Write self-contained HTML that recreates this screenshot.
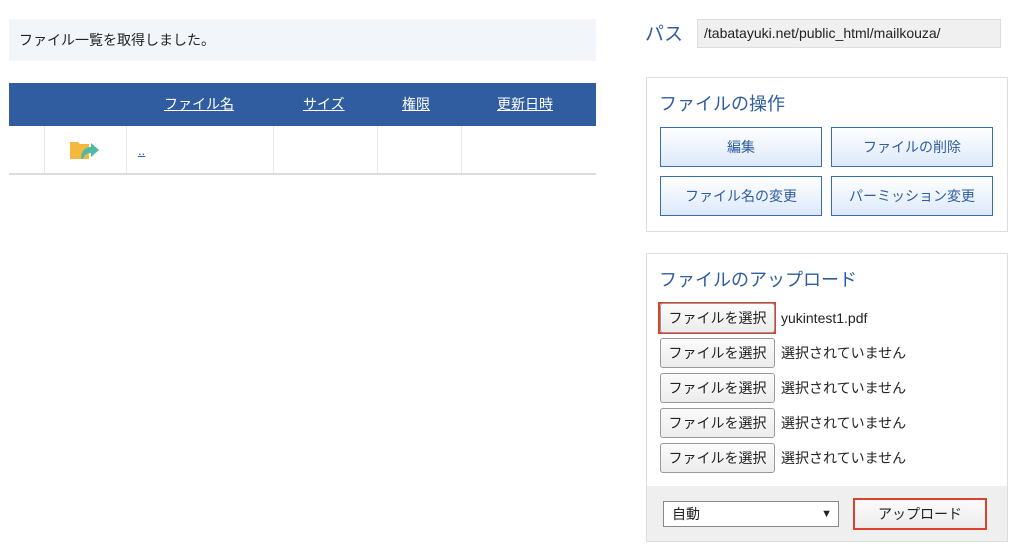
<!DOCTYPE html>
<html><head><meta charset="utf-8"><style>
*{box-sizing:border-box;margin:0;padding:0}
body{width:1024px;height:549px;background:#fff;font-family:"Liberation Sans","Noto Sans CJK JP",sans-serif;position:relative;overflow:hidden;color:#222}
.a{position:absolute}
.msg{left:9px;top:19px;width:587px;height:42px;background:#f2f5f9;font-size:14px;line-height:42px;padding-left:10px}
.th{left:9px;top:83px;width:587px;height:43px;background:#2f5d9f}
.th span{position:absolute;top:0;line-height:43px;color:#fff;font-size:14px;text-decoration:underline}
.vl{top:126px;width:1px;height:48px;background:#e8e8e8}
.pan{border:1px solid #ddd;background:#fff}
.ttl{color:#2f5d9f;font-size:18px}
.ob{border:1px solid #3a6db0;background:linear-gradient(#fff,#dce9fa);color:#2f5d9f;font-size:14px;text-align:center;line-height:38px;height:40px;width:162px}
.fb{left:660px;width:115px;height:30px;border:1px solid #999;border-radius:3px;background:linear-gradient(#fbfbfb,#ececec);font-size:14px;text-align:center;line-height:28px}
.ft{left:781px;font-size:14px;line-height:30px}
</style></head><body>
<div class="a msg">ファイル一覧を取得しました。</div>
<div class="a th"><span style="left:155px">ファイル名</span><span style="left:294px">サイズ</span><span style="left:393px">権限</span><span style="left:488px">更新日時</span></div>
<div class="a vl" style="left:44px"></div><div class="a vl" style="left:126px"></div><div class="a vl" style="left:273px"></div><div class="a vl" style="left:377px"></div><div class="a vl" style="left:461px"></div>
<div class="a" style="left:9px;top:173px;width:587px;height:2px;background:#ddd"></div>
<svg class="a" style="left:69px;top:138px" width="32" height="22" viewBox="0 0 32 22"><path d="M1 4h8l2 2h9v15H1z" fill="#f3b83d"/><path d="M12 21c0-8 4-12 10-12V5l8 7-8 7v-4c-4 0-7 2-8 6z" fill="#4fb9a4"/></svg>
<div class="a" style="left:138px;top:143px;color:#2f5dbf;font-size:13px;text-decoration:underline">..</div>

<div class="a ttl" style="left:645px;top:19px;font-size:19px">パス</div>
<div class="a" style="left:697px;top:19px;width:304px;height:29px;background:#f0f0f0;border:1px solid #ddd;font-size:14px;line-height:27px;padding-left:6px">/tabatayuki.net/public_html/mailkouza/</div>

<div class="a pan" style="left:646px;top:77px;width:362px;height:155px"></div>
<div class="a ttl" style="left:659px;top:90px">ファイルの操作</div>
<div class="a ob" style="left:660px;top:127px">編集</div>
<div class="a ob" style="left:831px;top:127px">ファイルの削除</div>
<div class="a ob" style="left:660px;top:176px">ファイル名の変更</div>
<div class="a ob" style="left:831px;top:176px">パーミッション変更</div>

<div class="a pan" style="left:646px;top:253px;width:362px;height:289px"></div>
<div class="a ttl" style="left:659px;top:266px">ファイルのアップロード</div>
<div class="a" style="left:658px;top:302px;width:118px;height:32px;border:2px solid #d9432e"></div>
<div class="a fb" style="top:303px">ファイルを選択</div><div class="a ft" style="top:303px">yukintest1.pdf</div>
<div class="a fb" style="top:338px">ファイルを選択</div><div class="a ft" style="top:338px">選択されていません</div>
<div class="a fb" style="top:373px">ファイルを選択</div><div class="a ft" style="top:373px">選択されていません</div>
<div class="a fb" style="top:408px">ファイルを選択</div><div class="a ft" style="top:408px">選択されていません</div>
<div class="a fb" style="top:443px">ファイルを選択</div><div class="a ft" style="top:443px">選択されていません</div>
<div class="a" style="left:647px;top:486px;width:360px;height:55px;background:#efefef"></div>
<div class="a" style="left:663px;top:501px;width:176px;height:26px;border:1px solid #888;background:#fff;font-size:14px;line-height:24px;padding-left:8px">自動<span style="position:absolute;right:6px;top:0;font-size:11px">&#9660;</span></div>
<div class="a" style="left:853px;top:498px;width:134px;height:32px;border:2px solid #d9432e;background:linear-gradient(#fbfbfb,#ececec);font-size:14px;text-align:center;line-height:28px">アップロード</div>
</body></html>
